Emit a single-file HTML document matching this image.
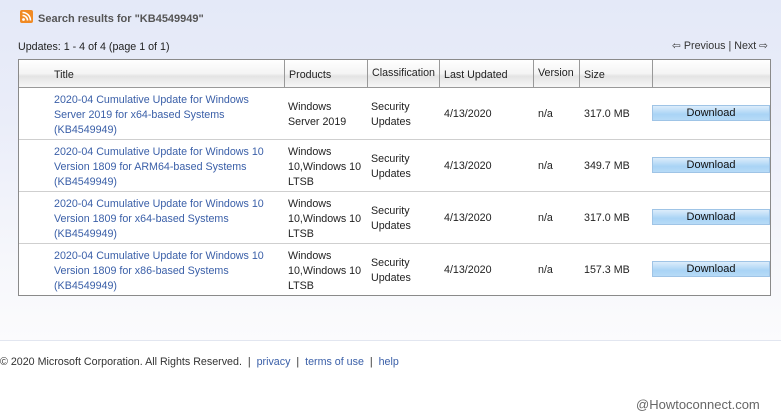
<!DOCTYPE html>
<html><head><style>
*{margin:0;padding:0;box-sizing:border-box}
body{width:781px;height:417px;overflow:hidden;position:relative;font-family:"Liberation Sans",sans-serif;font-size:10.7px;color:#222;background:#fff}
.bg{position:absolute;left:0;top:0;width:781px;height:340px;background:linear-gradient(#e4e9f8 0px,#eaedf9 120px,#f6f7fb 260px,#fbfbfd 340px)}
.a{position:absolute;white-space:nowrap;line-height:15px;margin-top:1px}
.tbl{position:absolute;left:18px;top:59px;width:753px;height:237px;background:#fff;border:1px solid #8a8a8a}
.hd{position:absolute;left:0;top:0;width:751px;height:28px;background:linear-gradient(#fff 0%,#f4f4f4 50%,#e4e4e4 60%,#f6f6f6 100%);border-bottom:1px solid #999}
.vl{position:absolute;top:0;width:1px;height:28px;background:#999}
.rl{position:absolute;left:0;width:751px;height:1px;background:#cfcfcf}
.lk{color:#3a5fa8}
.btn{position:absolute;left:633px;width:118px;height:16px;background:linear-gradient(#dcecfb,#a9d3f5 60%,#b7dbf7);border:1px solid #9fc4e6;text-align:center;line-height:14px;color:#111;font-size:11px}
</style></head><body>
<div class="bg"></div>
<div style="position:absolute;left:20px;top:10px;width:13px;height:13px;background:#f08a24;border-radius:2px"></div>
<svg style="position:absolute;left:20px;top:10px" width="13" height="13"><circle cx="3.5" cy="9.5" r="1.4" fill="#fff"/><path d="M2.5 5.5a5 5 0 0 1 5 5M2.5 2.5a8 8 0 0 1 8 8" stroke="#fff" stroke-width="1.6" fill="none"/></svg>
<div class="a" style="left:38px;top:11px;font-weight:bold;color:#555;font-size:11px">Search results for "KB4549949"</div>
<div class="a" style="left:18px;top:39px">Updates: 1 - 4 of 4 (page 1 of 1)</div>
<div class="a" style="left:672px;top:38px;color:#333">⇦ Previous | Next ⇨</div>
<div class="tbl">
<div class="hd"></div>
<div class="vl" style="left:265px"></div><div class="vl" style="left:348px"></div><div class="vl" style="left:420px"></div><div class="vl" style="left:514px"></div><div class="vl" style="left:560px"></div><div class="vl" style="left:633px"></div>
<div class="a" style="left:35px;top:7px">Title</div>
<div class="a" style="left:270px;top:7px">Products</div>
<div class="a" style="left:353px;top:5px">Classification</div>
<div class="a" style="left:425px;top:7px">Last Updated</div>
<div class="a" style="left:519px;top:5px">Version</div>
<div class="a" style="left:565px;top:7px">Size</div>
<div class="rl" style="top:79px"></div><div class="rl" style="top:131px"></div><div class="rl" style="top:183px"></div>

<div class="a lk" style="left:35px;top:32px">2020-04 Cumulative Update for Windows<br>Server 2019 for x64-based Systems<br>(KB4549949)</div>
<div class="a" style="left:269px;top:39px">Windows<br>Server 2019</div>
<div class="a" style="left:352px;top:39px">Security<br>Updates</div>
<div class="a" style="left:425px;top:46px">4/13/2020</div>
<div class="a" style="left:519px;top:46px">n/a</div>
<div class="a" style="left:565px;top:46px">317.0 MB</div>
<div class="btn" style="top:45px">Download</div>

<div class="a lk" style="left:35px;top:84px">2020-04 Cumulative Update for Windows 10<br>Version 1809 for ARM64-based Systems<br>(KB4549949)</div>
<div class="a" style="left:269px;top:84px">Windows<br>10,Windows 10<br>LTSB</div>
<div class="a" style="left:352px;top:91px">Security<br>Updates</div>
<div class="a" style="left:425px;top:98px">4/13/2020</div>
<div class="a" style="left:519px;top:98px">n/a</div>
<div class="a" style="left:565px;top:98px">349.7 MB</div>
<div class="btn" style="top:97px">Download</div>

<div class="a lk" style="left:35px;top:136px">2020-04 Cumulative Update for Windows 10<br>Version 1809 for x64-based Systems<br>(KB4549949)</div>
<div class="a" style="left:269px;top:136px">Windows<br>10,Windows 10<br>LTSB</div>
<div class="a" style="left:352px;top:143px">Security<br>Updates</div>
<div class="a" style="left:425px;top:150px">4/13/2020</div>
<div class="a" style="left:519px;top:150px">n/a</div>
<div class="a" style="left:565px;top:150px">317.0 MB</div>
<div class="btn" style="top:149px">Download</div>

<div class="a lk" style="left:35px;top:188px">2020-04 Cumulative Update for Windows 10<br>Version 1809 for x86-based Systems<br>(KB4549949)</div>
<div class="a" style="left:269px;top:188px">Windows<br>10,Windows 10<br>LTSB</div>
<div class="a" style="left:352px;top:195px">Security<br>Updates</div>
<div class="a" style="left:425px;top:202px">4/13/2020</div>
<div class="a" style="left:519px;top:202px">n/a</div>
<div class="a" style="left:565px;top:202px">157.3 MB</div>
<div class="btn" style="top:201px">Download</div>
</div>
<div style="position:absolute;left:0;top:340px;width:781px;height:1px;background:#e2e6f0"></div>
<div class="a" style="left:0;top:354px;color:#333">© 2020 Microsoft Corporation. All Rights Reserved. &nbsp;| &nbsp;<span class="lk">privacy</span> &nbsp;| &nbsp;<span class="lk">terms of use</span> &nbsp;| &nbsp;<span class="lk">help</span></div>
<div class="a" style="left:636px;top:396px;color:#666;font-size:13px">@Howtoconnect.com</div>
</body></html>
